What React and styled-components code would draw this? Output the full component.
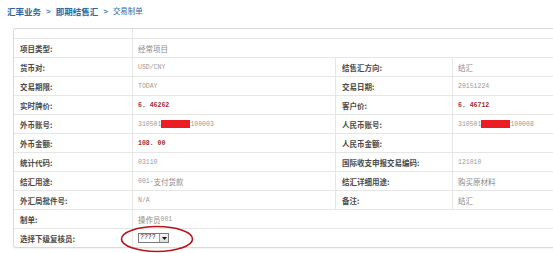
import React from 'react'
import styled, { createGlobalStyle } from 'styled-components'

const Global = createGlobalStyle`
  html, body {
    margin: 0;
    padding: 0;
    background: #fff;
    overflow: hidden;
  }
  body {
    width: 553px;
    height: 253px;
    font-family: "Noto Sans CJK SC", "Noto Sans", sans-serif;
  }
`

const Crumbs = styled.div`
  display: flex;
  align-items: center;
  gap: 5px;
  height: 22px;
  padding-left: 7px;
`
const Crumb = styled.span`
  color: #2c6aa0;
  font-size: ${p => (p.$current ? '7.5px' : '8.5px')};
  font-weight: ${p => (p.$current ? 'normal' : 'bold')};
  line-height: 10px;
`
const Sep = styled.span`
  color: #4a7fb0;
  font-size: 8px;
  font-family: "Liberation Sans", sans-serif;
  font-weight: bold;
`

const Panel = styled.div`
  margin: 6px 0 0 13px;
  width: 560px;
  border: 1px solid #dadada;
  border-right: none;
  border-top-left-radius: 3px;
  border-bottom-left-radius: 3px;
  display: grid;
  grid-template-columns: 119px 203px 117px 1fr;
  box-shadow: 0 1px 1px rgba(0, 0, 0, 0.05);
`
const Head = styled.div`
  height: 9px;
  box-sizing: border-box;
  border-right: ${p => (p.$span ? 'none' : '1px solid #e6e6e6')};
  grid-column: ${p => (p.$span ? 'span 3' : 'auto')};
`
const Label = styled.div`
  height: 19px;
  box-sizing: border-box;
  border-top: 1px solid #e6e6e6;
  border-right: 1px solid #e6e6e6;
  padding-left: 6px;
  display: flex;
  align-items: center;
  color: #4a4a4a;
  font-size: 7.5px;
  font-weight: bold;
  white-space: nowrap;
`
const Value = styled.div`
  height: 19px;
  box-sizing: border-box;
  border-top: 1px solid #e6e6e6;
  border-right: ${p => (p.$span || p.$last ? 'none' : '1px solid #e6e6e6')};
  grid-column: ${p => (p.$span ? 'span 3' : 'auto')};
  padding-left: 5px;
  display: flex;
  align-items: center;
  color: #8a8a8a;
  font-size: 7.5px;
  white-space: nowrap;
  position: relative;
`
const Mono = styled.span`
  font-family: "Liberation Mono", monospace;
  font-size: 6.5px;
  color: #9a9a9a;
`
const Price = styled.span`
  font-family: "Liberation Mono", monospace;
  font-size: 6.5px;
  font-weight: bold;
  color: #a52a2a;
`
const Redact = styled.span`
  display: inline-block;
  width: 29px;
  height: 8px;
  background: #ea1c24;
`
const Select = styled.div`
  position: relative;
  display: flex;
  align-items: stretch;
  width: 31px;
  height: 10px;
  box-sizing: border-box;
  border: 1px solid #7a7a7a;
  margin-left: 0;
  background: #fff;
`
const SelText = styled.span`
  flex: 1;
  font-family: "Liberation Mono", monospace;
  font-size: 6.5px;
  line-height: 8px;
  color: #222;
  padding-left: 1px;
`
const SelBtn = styled.span`
  width: 8px;
  border-left: 1px solid #9a9a9a;
  background: linear-gradient(#f4f4f4, #dcdcdc);
  display: flex;
  align-items: center;
  justify-content: center;
`
const Ring = styled.svg`
  position: absolute;
  left: -19px;
  top: -9px;
  width: 74px;
  height: 28px;
  pointer-events: none;
`

const Account = ({ head, tail }) => (
  <>
    <Mono>{head}</Mono>
    <Redact />
    <Mono>{tail}</Mono>
  </>
)

const rows = [
  { l: '项目类型:', v: '经常项目', span: true },
  { l: '货币对:', v: <Mono>USD/CNY</Mono>, l2: '结售汇方向:', v2: '结汇' },
  { l: '交易期限:', v: <Mono>TODAY</Mono>, l2: '交易日期:', v2: <Mono>20151224</Mono> },
  { l: '实时牌价:', v: <Price>6. 46262</Price>, l2: '客户价:', v2: <Price>6. 46712</Price> },
  {
    l: '外币账号:',
    v: <Account head="310501" tail="100003" />,
    l2: '人民币账号:',
    v2: <Account head="310501" tail="100008" />,
  },
  { l: '外币金额:', v: <Price>108. 00</Price>, l2: '人民币金额:', v2: '' },
  { l: '统计代码:', v: <Mono>03110</Mono>, l2: '国际收支申报交易编码:', v2: <Mono>121010</Mono> },
  { l: '结汇用途:', v: <><Mono>001-</Mono>支付货款</>, l2: '结汇详细用途:', v2: '购买原材料' },
  { l: '外汇局批件号:', v: <Mono>N/A</Mono>, l2: '备注:', v2: '结汇' },
  { l: '制单:', v: <>操作员<Mono>001</Mono></>, span: true },
]

export default function App() {
  return (
    <>
      <Global />
      <Crumbs>
        <Crumb>汇率业务</Crumb>
        <Sep>&gt;</Sep>
        <Crumb>即期结售汇</Crumb>
        <Sep>&gt;</Sep>
        <Crumb $current>交易制单</Crumb>
      </Crumbs>
      <Panel>
        <Head />
        <Head $span />
        {rows.map((r, i) => (
          <React.Fragment key={i}>
            <Label>{r.l}</Label>
            <Value $span={r.span}>{r.v}</Value>
            {!r.span && <Label>{r.l2}</Label>}
            {!r.span && <Value $last>{r.v2}</Value>}
          </React.Fragment>
        ))}
        <Label>选择下级复核员:</Label>
        <Value $span>
          <Select>
            <SelText>????</SelText>
            <SelBtn>
              <svg width="5" height="3" viewBox="0 0 5 3">
                <path d="M0 0 L5 0 L2.5 3 Z" fill="#111" />
              </svg>
            </SelBtn>
            <Ring viewBox="0 0 74 28">
              <ellipse cx="37" cy="14" rx="35.5" ry="12.5" fill="none" stroke="#b3161c" strokeWidth="1.6" />
            </Ring>
          </Select>
        </Value>
      </Panel>
    </>
  )
}
